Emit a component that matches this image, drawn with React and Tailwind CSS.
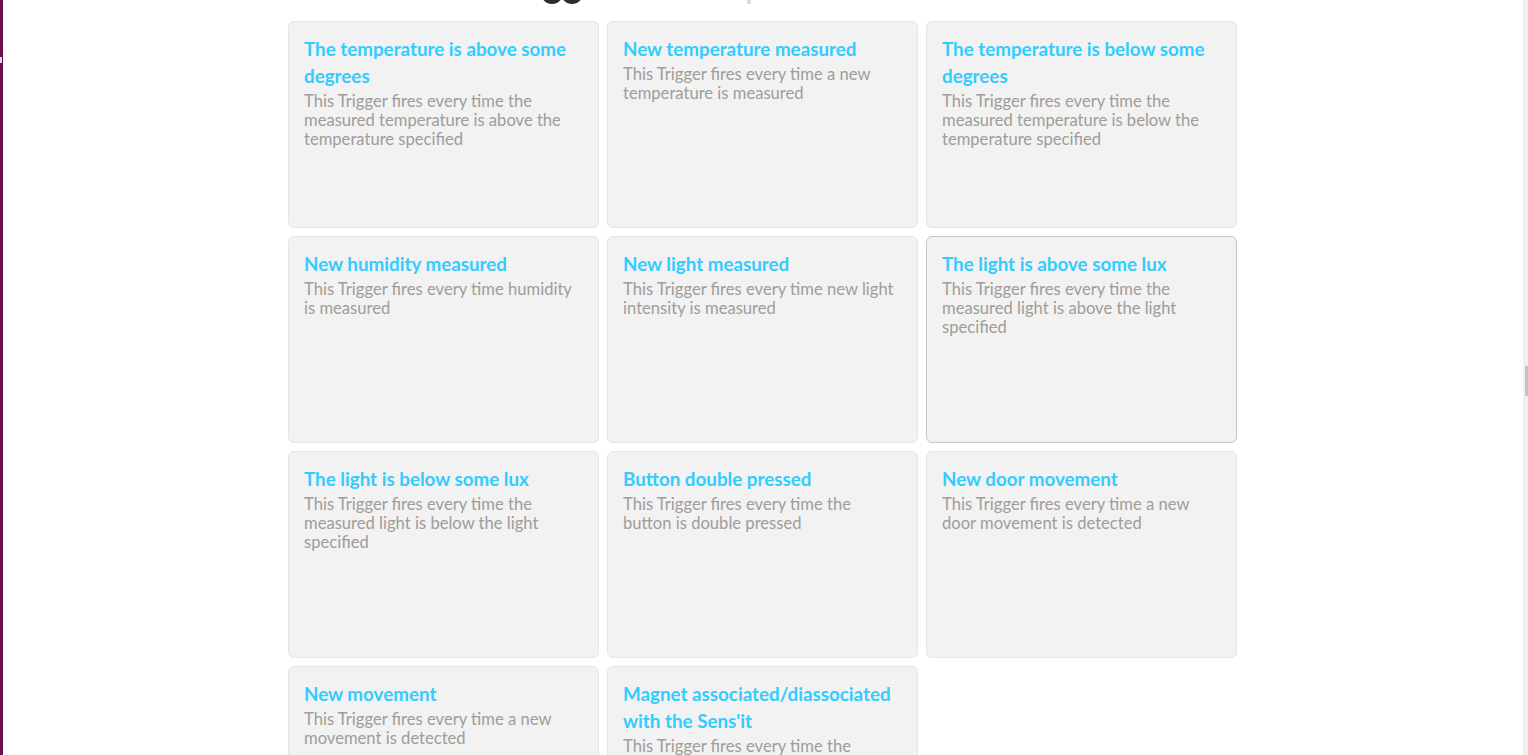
const cards = [
  { t: "The temperature is above some degrees", d: "This Trigger fires every time the measured temperature is above the temperature specified" },
  { t: "New temperature measured", d: "This Trigger fires every time a new temperature is measured" },
  { t: "The temperature is below some degrees", d: "This Trigger fires every time the measured temperature is below the temperature specified" },
  { t: "New humidity measured", d: "This Trigger fires every time humidity is measured" },
  { t: "New light measured", d: "This Trigger fires every time new light intensity is measured" },
  { t: "The light is above some lux", d: "This Trigger fires every time the measured light is above the light specified", hover: true },
  { t: "The light is below some lux", d: "This Trigger fires every time the measured light is below the light specified" },
  { t: "Button double pressed", d: "This Trigger fires every time the button is double pressed" },
  { t: "New door movement", d: "This Trigger fires every time a new door movement is detected" },
  { t: "New movement", d: "This Trigger fires every time a new movement is detected" },
  { t: "Magnet associated/diassociated with the Sens'it", d: "This Trigger fires every time the magnet is associated or diassociated with the Sens'it" },
];

export default function App() {
  return (
    <div
      className="flex h-[755px] w-[1528px] overflow-hidden bg-white"
      style={{ fontFamily: "Lato, 'Open Sans', sans-serif" }}
    >
      <div className="relative w-[3px] shrink-0 bg-[#6c0f4e]">
        <div className="absolute left-0 top-[57px] h-[6px] w-[2px] bg-[#d9d9d9]" />
      </div>
      <main className="flex flex-1 flex-col items-center pr-[1px]">
        <div className="flex h-[21px] w-[949px] shrink-0">
          <div className="flex h-[4px] w-full overflow-hidden">
            <div className="ml-[253px] flex items-end">
              <div className="h-[22px] w-[22px] rounded-full bg-[#2d2d2d]" />
              <div className="-ml-[2px] h-[22px] w-[22px] rounded-full bg-[#2d2d2d]" />
            </div>
            <div className="ml-[164px] h-[4px] w-[4px] bg-[#dcdcdc]" />
          </div>
        </div>
        <div className="grid w-[949px] grid-cols-3 gap-x-[8px] gap-y-[8px]">
          {cards.map((c, i) => (
            <div
              key={i}
              className={`h-[207px] rounded-[6px] border bg-[#f2f2f2] px-[15px] pt-[13px] ${
                c.hover ? "border-[#c6c6c6]" : "border-[#e5e5e5]"
              }`}
            >
              <div className="text-[18.8px] font-bold leading-[27px] text-[#33ccff]">{c.t}</div>
              <div className="mt-[3px] text-[16.6px] leading-[19px] text-[#a09c99]">{c.d}</div>
            </div>
          ))}
        </div>
      </main>
      <div className="relative w-[5px] shrink-0 bg-[#f0f0f0]">
        <div className="absolute left-[2px] top-[366px] h-[30px] w-[3px] bg-[#c2c2c2]" />
      </div>
    </div>
  );
}
